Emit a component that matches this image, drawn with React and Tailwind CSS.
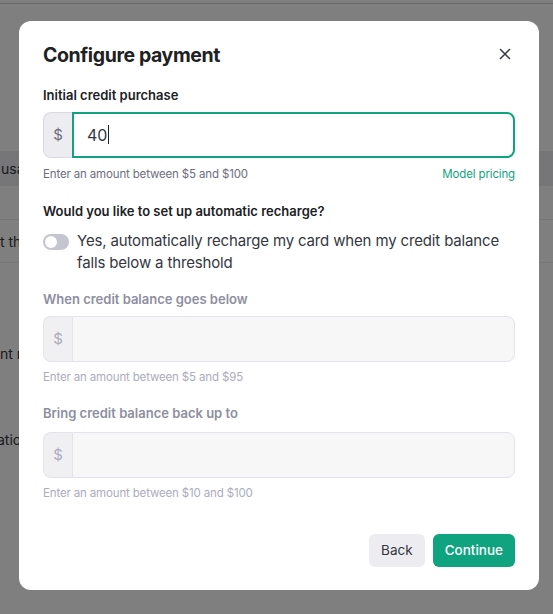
import React from "react";

const font = { fontFamily: "Inter, 'Noto Sans', sans-serif" };

const MoneyInput = ({ value, disabled }) => (
  <div className="flex h-[46px] w-full">
    <div
      className={`flex w-[29px] items-center justify-center rounded-l-lg border border-r-0 text-[15px] ${
        disabled ? "border-[#e3e3ea] bg-[#f0f0f3] text-[#acacbe]" : "border-[#d9d9e3] bg-[#ececf1] text-[#6e6e80]"
      }`}
    >
      $
    </div>
    {disabled ? (
      <div className="flex-1 rounded-r-lg border border-[#e3e3ea] bg-[#f7f7f8]" />
    ) : (
      <div className="flex flex-1 items-center rounded-r-lg border-2 border-[#10a37f] pl-[13px] text-[16px] text-[#353740]">
        {value}
        <span className="ml-[1px] h-[19px] w-px bg-[#202123]" />
      </div>
    )}
  </div>
);

export default function App() {
  return (
    <div className="relative h-[614px] w-[553px] overflow-hidden bg-white" style={font}>
      {/* page behind the dialog, only its left strip shows */}
      <div className="flex flex-col text-[14px] text-[#353740]">
        <div className="h-[4px] border-b border-[#d0d0d8]" />
        <div className="mt-[147px] flex h-[35px] items-center bg-[#ececf1]">
          <span className="w-[19px] overflow-hidden whitespace-nowrap pl-[1px]">usage</span>
        </div>
        <div className="mt-[33px] border-t border-[#ececf1]" />
        <div className="flex h-[42px] items-center">
          <span className="w-[19px] overflow-hidden whitespace-nowrap">t the</span>
        </div>
        <div className="border-t border-[#ececf1]" />
        <span className="mt-[80px] w-[19px] overflow-hidden whitespace-nowrap">nt mode</span>
        <span className="mt-[65px] w-[19px] overflow-hidden whitespace-nowrap -indent-[3px]">ation</span>
      </div>
      <div className="absolute inset-0 bg-black/50" />

      {/* dialog */}
      <div className="absolute left-[19px] top-[21px] flex h-[569px] w-[520px] flex-col rounded-xl bg-white px-6 pt-[20px]">
        <div className="flex items-center justify-between">
          <h2 className="text-[19.5px] font-bold tracking-[-0.4px] text-[#202123]">Configure payment</h2>
          <svg width="12" height="12" viewBox="0 0 12 12" className="mr-[4px] mt-[-3px]" fill="none" stroke="#353740" strokeWidth="1.5" strokeLinecap="round">
            <path d="M1.5 1.5l9 9M10.5 1.5l-9 9" />
          </svg>
        </div>

        <label className="mt-[16px] text-[13px] font-semibold text-[#202123]">Initial credit purchase</label>
        <div className="mt-[6px]">
          <MoneyInput value="40" />
        </div>
        <div className="mt-[8px] flex justify-between text-[11.5px] tracking-[-0.15px]">
          <span className="text-[#6e6e80]">Enter an amount between $5 and $100</span>
          <span className="text-[#10a37f]">Model pricing</span>
        </div>

        <label className="mt-[19px] text-[13px] font-semibold text-[#202123]">
          Would you like to set up automatic recharge?
        </label>
        <div className="mt-[8px] flex items-start gap-[8px]">
          <div className="mt-[4px] flex h-[16px] w-[26px] shrink-0 items-center rounded-full bg-[#c5c5d2] p-[2px]">
            <div className="h-[12px] w-[12px] rounded-full bg-white" />
          </div>
          <p className="text-[15px] leading-[22px] tracking-[-0.15px] text-[#353740]">
            Yes, automatically recharge my card when my credit balance falls below a threshold
          </p>
        </div>

        <label className="mt-[16px] text-[13px] font-semibold text-[#8e8ea0]">When credit balance goes below</label>
        <div className="mt-[7px]">
          <MoneyInput disabled />
        </div>
        <div className="mt-[7px] text-[11.5px] tracking-[-0.15px] text-[#acacbe]">Enter an amount between $5 and $95</div>

        <label className="mt-[18px] text-[13px] font-semibold text-[#8e8ea0]">Bring credit balance back up to</label>
        <div className="mt-[8px]">
          <MoneyInput disabled />
        </div>
        <div className="mt-[7px] text-[11.5px] tracking-[-0.15px] text-[#acacbe]">Enter an amount between $10 and $100</div>

        <div className="mt-[32px] flex justify-end gap-[8px]">
          <button className="h-[33px] rounded-md bg-[#ececf1] px-[12px] text-[13.5px] text-[#353740]">Back</button>
          <button className="h-[33px] rounded-md bg-[#10a37f] px-[12px] text-[13.5px] font-medium text-white">Continue</button>
        </div>
      </div>
    </div>
  );
}
